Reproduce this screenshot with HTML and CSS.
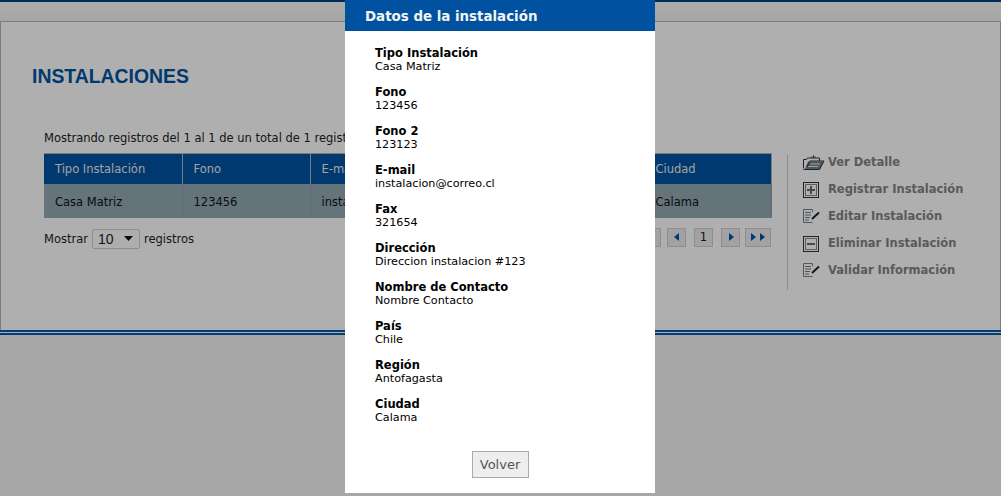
FILE: index.html
```html
<!DOCTYPE html>
<html lang="es">
<head>
<meta charset="utf-8">
<title>Instalaciones</title>
<link rel="stylesheet" href="styles.css">
</head>
<body>
<div class="page">
  <div class="panel">
    <h1 class="title">INSTALACIONES</h1>
    <div class="content">
      <div class="main">
        <p class="info">Mostrando registros del 1 al 1 de un total de 1 registros</p>
        <table class="grid">
          <thead>
            <tr><th class="c1">Tipo Instalación</th><th class="c2">Fono</th><th class="c3">E-mail</th><th class="c4">Ciudad</th></tr>
          </thead>
          <tbody>
            <tr><td>Casa Matriz</td><td>123456</td><td>instalacion@correo.cl</td><td>Calama</td></tr>
          </tbody>
        </table>
        <div class="foot">
          <div class="length">Mostrar <span class="select">10<svg class="caret" width="9" height="5" viewBox="0 0 9 5"><path d="M0 0h9L4.500 5z"/></svg></span> registros</div>
          <div class="pager">
            <span class="pg pg-first"></span>
            <span class="pg pg-arrow"><svg width="6" height="8" viewBox="0 0 6 8"><path d="M5 0v8L0 4z"/></svg></span>
            <span class="pg pg-num">1</span>
            <span class="pg pg-arrow"><svg width="6" height="8" viewBox="0 0 6 8"><path d="M1 0v8l5-4z"/></svg></span>
            <span class="pg pg-last"><svg width="16" height="8" viewBox="0 0 16 8"><path d="M1 0v8l5-4zM10 0v8l5-4z"/></svg></span>
          </div>
        </div>
      </div>
      <ul class="actions">
        <li><svg class="ic" width="24" height="20" viewBox="0 0 24 20" fill="none"><path d="M9 5h5M11.500 3v3" stroke="#5f6e75"/><path d="M6 9.500h16l-4 7.500H3z" fill="#6f828c"/><path d="M1.500 16.500v-9h3l1-1.500h12v3" stroke="#333"/><path d="M1.500 17.500h16l4.500-8.500h-14l-3 6" stroke="#333"/><path d="M8 12h10M6 14.500h10" stroke="#e6e6e6"/></svg>Ver Detalle</li>
        <li><svg class="ic" width="24" height="20" viewBox="0 0 24 20" fill="none"><rect x="1.500" y="3.500" width="15" height="15" stroke="#333"/><rect x="3.500" y="5.500" width="11" height="11" stroke="#7d8a90"/><path d="M9 7v8M5 11h8" stroke="#5f6e75" stroke-width="2"/></svg>Registrar Instalación</li>
        <li><svg class="ic" width="24" height="20" viewBox="0 0 24 20" fill="none"><path d="M10.500 6v-2.500h-9v13h9" stroke="#6f7f86"/><path d="M3 6.500h6M3 9h6M3 11.500h5M3 14h4" stroke="#6f7f86"/><path d="M10 13l7-6.500" stroke="#222" stroke-width="2"/></svg>Editar Instalación</li>
        <li><svg class="ic" width="24" height="20" viewBox="0 0 24 20" fill="none"><rect x="1.500" y="3.500" width="15" height="15" stroke="#333"/><rect x="3.500" y="5.500" width="11" height="11" stroke="#7d8a90"/><path d="M5 11h8" stroke="#5f6e75" stroke-width="2"/></svg>Eliminar Instalación</li>
        <li><svg class="ic" width="24" height="20" viewBox="0 0 24 20" fill="none"><path d="M10.500 6v-2.500h-9v13h9" stroke="#6f7f86"/><path d="M3 6.500h6M3 9h6M3 11.500h5M3 14h4" stroke="#6f7f86"/><path d="M10 13l7-6.500" stroke="#222" stroke-width="2"/></svg>Validar Información</li>
      </ul>
    </div>
  </div>
  <div class="rule"></div>
</div>
<div class="overlay"></div>
<section class="modal">
  <h2 class="modal-title">Datos de la instalación</h2>
  <dl class="fields">
    <div class="field"><dt>Tipo Instalación</dt><dd>Casa Matriz</dd></div>
    <div class="field"><dt>Fono</dt><dd>123456</dd></div>
    <div class="field"><dt>Fono 2</dt><dd>123123</dd></div>
    <div class="field"><dt>E-mail</dt><dd>instalacion@correo.cl</dd></div>
    <div class="field"><dt>Fax</dt><dd>321654</dd></div>
    <div class="field"><dt>Dirección</dt><dd>Direccion instalacion #123</dd></div>
    <div class="field"><dt>Nombre de Contacto</dt><dd>Nombre Contacto</dd></div>
    <div class="field"><dt>País</dt><dd>Chile</dd></div>
    <div class="field"><dt>Región</dt><dd>Antofagasta</dd></div>
    <div class="field"><dt>Ciudad</dt><dd>Calama</dd></div>
  </dl>
  <div class="modal-foot"><button class="btn" type="button">Volver</button></div>
</section>
</body>
</html>
```
FILE: styles.css
```css
* { box-sizing: border-box; }
html, body { margin: 0; padding: 0; height: 496px; overflow: hidden; }
body {
  font-family: "DejaVu Sans", Verdana, sans-serif;
  font-size: 11.2px;
  color: #222;
  background: #f0f0f0;
}
.page {
  border-top: 2px solid #00407f;
  padding-top: 19px;
  background: linear-gradient(#f6f6f6 0, #ececec 21px, #f0f0f0 21px);
}
.panel {
  height: 309px;
  background: #fbfbfb;
  border: 1px solid #b3b3b3;
  border-bottom: 0;
  padding-top: 42px;
}
.title {
  margin: 0 0 0 31px;
  font: bold 19.400px/24px "Liberation Sans", Arial, sans-serif;
  color: #0052a0;
}
.content { display: flex; margin-top: 43px; }
.main { width: 728px; margin-left: 43px; font-size: 11.500px; }
.info { margin: 0 0 8px; line-height: 14px; }
.grid { width: 728px; border-collapse: collapse; table-layout: fixed; }
.grid th {
  height: 30px;
  background: #0052a0;
  color: #e8e8e8;
  font-weight: normal;
  text-align: left;
  padding: 0 0 0 11px;
  border: 1px solid #b3b3b3;
  border-width: 1px 1px 0 0;
}
.grid td {
  height: 34px;
  background: #91a5b0;
  padding: 2px 0 0 11px;
  border-right: 1px solid #8a9aa3;
  color: #111;
}
.c1 { width: 138px; }
.c2 { width: 128px; }
.c3 { width: 334px; }
.foot { display: flex; justify-content: space-between; margin-top: 11px; }
.length { display: flex; align-items: center; gap: 4px; height: 20px; }
.select {
  width: 48px;
  height: 20px;
  border: 1px solid #ccc;
  border-radius: 2px;
  background: #fafafa;
  display: flex;
  align-items: center;
  justify-content: space-between;
  padding: 0 6px 0 5px;
  font: 14px "Liberation Sans", Arial, sans-serif;
}
.caret { fill: #111; }
.pager { display: flex; gap: 8px; padding-right: 1px; margin-top: -1px; }
.pg {
  height: 19px;
  width: 19px;
  background: #e8e8e8;
  border: 1px solid #ccc;
  display: flex;
  align-items: center;
  justify-content: center;
  fill: #0052a0;
}
.pg-first { width: 19px; border-left: 0; margin-right: -2px; }
.pg-last { width: 26px; margin-left: -3px; }
.actions {
  list-style: none;
  margin: 24px 0 0 15px;
  padding: 0 0 0 14px;
  border-left: 1px solid #c9c9c9;
  height: 135px;
  display: flex;
  flex-direction: column;
  gap: 13px;
  font-weight: bold;
  font-size: 11.500px;
  color: #828282;
}
.actions li { display: flex; align-items: center; height: 14px; line-height: 14px; }
.ic { margin-right: 2px; flex: none; }
.rule {
  height: 5px;
  background: #fbfbfb;
  border-top: 2px solid #0056a8;
  border-bottom: 2px solid #0056a8;
}
.overlay { position: fixed; inset: 0; background: rgba(0,0,0,.3); }
.modal {
  position: fixed;
  left: 345px;
  top: 0;
  width: 310px;
  height: 493px;
  background: #fff;
  color: #000;
}
.modal-title {
  margin: 0;
  height: 31px;
  padding: 0 0 0 20px;
  background: #0052a0;
  color: #f4f4f4;
  font-size: 13.400px;
  font-weight: bold;
  line-height: 34px;
}
.fields { margin: 16px 0 0 30px; display: flex; flex-direction: column; gap: 13px; }
.field { line-height: 13px; }
.fields dt { font-weight: bold; font-size: 11.500px; }
.fields dd { margin: 0; }
.modal-foot { display: flex; justify-content: center; margin-top: 27px; }
.btn {
  width: 57px;
  height: 27px;
  padding: 0;
  background: #eee;
  border: 1px solid #aaa;
  color: #555;
  font: 13px "DejaVu Sans", Verdana, sans-serif;
}
```
